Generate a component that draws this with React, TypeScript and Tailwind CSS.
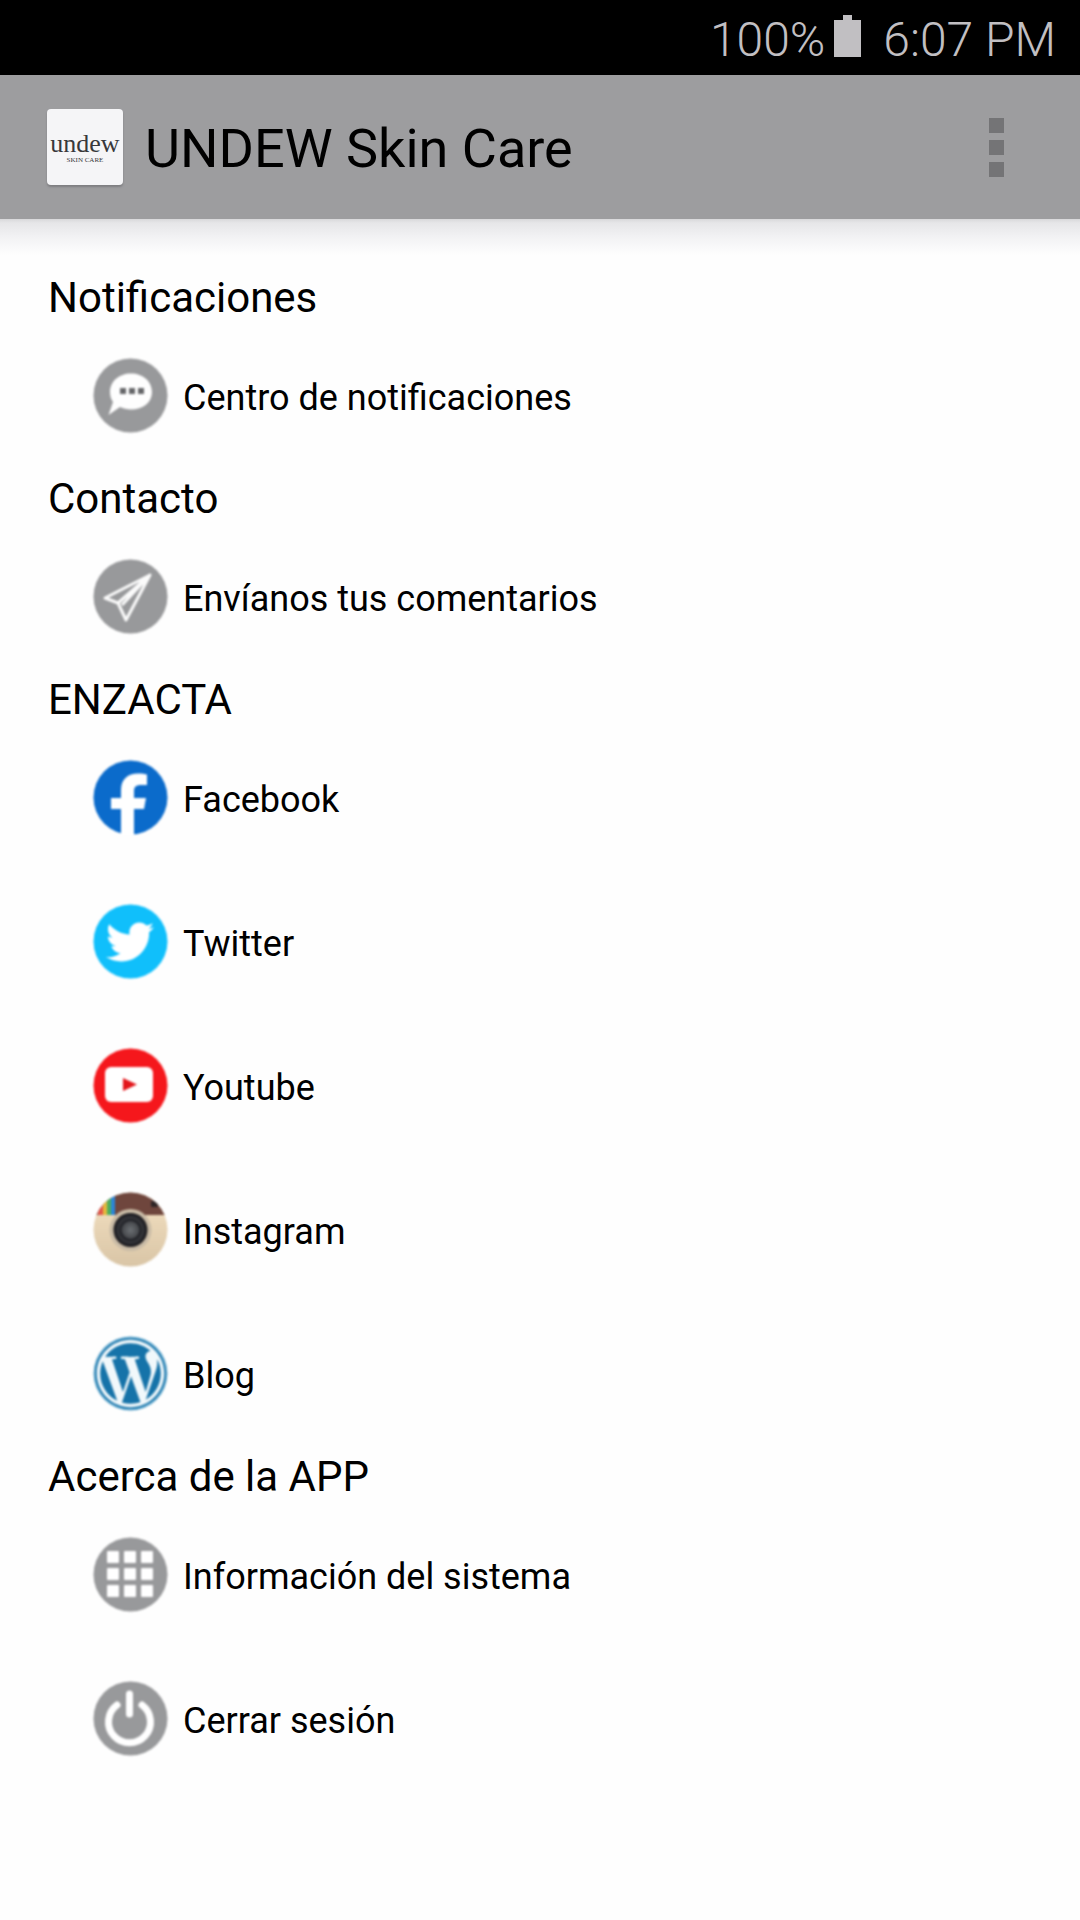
import type { ReactNode } from "react";
import { FaTwitter, FaWordpress } from "react-icons/fa";

function Disc({ fill, children }: { fill: string; children?: ReactNode }) {
  return (
    <svg viewBox="0 0 75 75" className="mb-1.5 size-[75px] shrink-0 blur-[1px]" aria-hidden="true">
      <circle cx="37.5" cy="37.5" r="37" fill={fill} />
      {children}
    </svg>
  );
}

const grey = "#98999b";

function ChatIcon() {
  return (
    <Disc fill={grey}>
      <path
        d="M38 15.500C50 15.500 59 23.500 59 34S50 51.500 38 51.500C34 51.500 30 50.500 27 49L15.500 57L20 44C18 41 17 38 17 34C17 23.500 26 15.500 38 15.500Z"
        fill="#fefefe"
      />
      <g fill="#66676a">
        <rect x="27" y="30" width="6" height="6" />
        <rect x="36" y="30" width="6" height="6" />
        <rect x="45" y="30" width="6" height="6" />
      </g>
    </Disc>
  );
}

function PlaneIcon() {
  return (
    <Disc fill={grey}>
      <path
        d="M57 16L12 39L25 44L33 61L57 16ZM25 44L57 16L29 46"
        fill="none"
        stroke="#fbfbfb"
        strokeWidth="3"
        strokeLinejoin="round"
      />
    </Disc>
  );
}

function FacebookIcon() {
  return (
    <Disc fill="#0b6bcb">
      <path
        d="M28 75V49H18V38H28V30C28 19 35 13.500 45 13.500C49 13.500 52 14 54 14.500V25H48C43 25 41 27 41 31V38H53L51 49H41V75Z"
        fill="#fff"
      />
    </Disc>
  );
}

function TwitterIcon() {
  return (
    <Disc fill="#10bffb">
      <FaTwitter x="13" y="14" size={48} color="#fff" />
    </Disc>
  );
}

function YoutubeIcon() {
  return (
    <Disc fill="#f5171c">
      <rect x="12" y="19" width="48" height="35" rx="6" fill="#fff" />
      <path d="M30 30V43L44 36.500Z" fill="#e3161b" />
    </Disc>
  );
}

function InstagramIcon() {
  return (
    <svg viewBox="0 0 75 75" className="mb-1.5 size-[75px] shrink-0 blur-[1px]" aria-hidden="true">
      <defs>
        <clipPath id="ig-disc">
          <circle cx="37.5" cy="37.5" r="37" />
        </clipPath>
        <linearGradient id="ig-body" x1="0" y1="0" x2="0" y2="1">
          <stop offset="0.300" stopColor="#ecd9ba" />
          <stop offset="1" stopColor="#d9c5a6" />
        </linearGradient>
        <radialGradient id="ig-lens">
          <stop offset="0" stopColor="#6c7074" />
          <stop offset="0.500" stopColor="#45474b" />
          <stop offset="0.750" stopColor="#303136" />
          <stop offset="1" stopColor="#17161a" />
        </radialGradient>
      </defs>
      <g clipPath="url(#ig-disc)">
        <rect width="75" height="75" fill="url(#ig-body)" />
        <rect width="75" height="23" fill="#6f463d" />
        <rect x="5" width="5" height="23" fill="#e2564a" />
        <rect x="10" width="4" height="23" fill="#e5b93c" />
        <rect x="14" width="4" height="23" fill="#4fae5c" />
        <rect x="18" width="4" height="23" fill="#2a86d9" />
        <rect x="58" y="9" width="7" height="6" rx="1" fill="#2d2526" />
        <circle cx="37.500" cy="38" r="21" fill="#c9bba6" />
        <circle cx="37.500" cy="38" r="17" fill="url(#ig-lens)" />
        <circle cx="37.500" cy="38" r="10" fill="none" stroke="#222328" strokeWidth="2" />
      </g>
    </svg>
  );
}

function WordpressIcon() {
  return (
    <Disc fill="#5fa6cc">
      <circle cx="37.500" cy="37.500" r="35" fill="#f1f8fb" />
      <FaWordpress x="1" y="1" size={73} color="#1673a9" />
    </Disc>
  );
}

const gridSteps = [14, 31, 48];

function GridIcon() {
  return (
    <Disc fill={grey}>
      {gridSteps.map((y) =>
        gridSteps.map((x) => <rect key={`${x}-${y}`} x={x} y={y} width="12" height="12" rx="1" fill="#fff" />),
      )}
    </Disc>
  );
}

function PowerIcon() {
  return (
    <Disc fill={grey}>
      <g fill="none" stroke="#fff" strokeWidth="7" strokeLinecap="round">
        <path d="M36.500 13V33" />
        <path d="M24 24A21 21 0 1 0 49 24" />
      </g>
    </Disc>
  );
}

type Item = { label: string; icon: ReactNode; href?: string };

const sections: { title: string; items: Item[] }[] = [
  { title: "Notificaciones", items: [{ label: "Centro de notificaciones", icon: <ChatIcon /> }] },
  { title: "Contacto", items: [{ label: "Envíanos tus comentarios", icon: <PlaneIcon /> }] },
  {
    title: "ENZACTA",
    items: [
      { label: "Facebook", icon: <FacebookIcon />, href: "#facebook" },
      { label: "Twitter", icon: <TwitterIcon />, href: "#twitter" },
      { label: "Youtube", icon: <YoutubeIcon />, href: "#youtube" },
      { label: "Instagram", icon: <InstagramIcon />, href: "#instagram" },
      { label: "Blog", icon: <WordpressIcon />, href: "#blog" },
    ],
  },
  {
    title: "Acerca de la APP",
    items: [
      { label: "Información del sistema", icon: <GridIcon /> },
      { label: "Cerrar sesión", icon: <PowerIcon /> },
    ],
  },
];

function Row({ item }: { item: Item }) {
  const cls = "flex h-36 w-full items-center gap-[15px] pl-[93px] text-left text-[36px] leading-none";
  const content = (
    <>
      {item.icon}
      <span>{item.label}</span>
    </>
  );
  return (
    <li>
      {item.href ? (
        <a href={item.href} className={cls}>
          {content}
        </a>
      ) : (
        <button type="button" className={cls}>
          {content}
        </button>
      )}
    </li>
  );
}

export default function App() {
  return (
    <div className="min-h-screen bg-[#fefefe] font-['Roboto',sans-serif] text-black">
      <div className="flex h-[75px] items-center justify-end bg-black pr-6 pt-1 text-[48px] leading-none font-light text-[#c1bfc2]">
        <span>100%</span>
        <svg viewBox="0 0 27 42" className="mr-[22px] mb-2 ml-[9px] h-[42px] w-[27px]" aria-hidden="true">
          <path d="M9 0H18V5H27V42H0V5H9Z" fill="#c1bfc2" />
        </svg>
        <span>6:07 PM</span>
      </div>
      <header className="flex h-36 items-center bg-[#9d9d9f] pr-[76px] pl-[47px]">
        <div className="flex size-[76px] flex-col items-center rounded-[4px] bg-[#f5f5f7] pt-[22px] font-['Liberation_Serif',serif] text-[#38383b] shadow-[0_2px_2px_#7f7f82]">
          <span className="text-[26px] leading-[26px]">undew</span>
          <span className="text-[7px] leading-[6px]">SKIN CARE</span>
        </div>
        <h1 className="ml-[22px] grow pt-1 text-[54px] leading-none">UNDEW Skin Care</h1>
        <button type="button" aria-label="Más opciones" className="flex flex-col gap-[7px]">
          <span className="size-[15px] bg-[#747476]" />
          <span className="size-[15px] bg-[#747476]" />
          <span className="size-[15px] bg-[#747476]" />
        </button>
      </header>
      <main className="bg-[linear-gradient(to_bottom,#d8d8da_0px,#e6e6e8_4px,#f2f2f4_18px,#fefefe_36px)] bg-no-repeat pt-[50px]">
        {sections.map((section) => (
          <section key={section.title}>
            <h2 className="pl-12 text-[42px] leading-[57px]">{section.title}</h2>
            <ul>
              {section.items.map((item) => (
                <Row key={item.label} item={item} />
              ))}
            </ul>
          </section>
        ))}
      </main>
    </div>
  );
}
